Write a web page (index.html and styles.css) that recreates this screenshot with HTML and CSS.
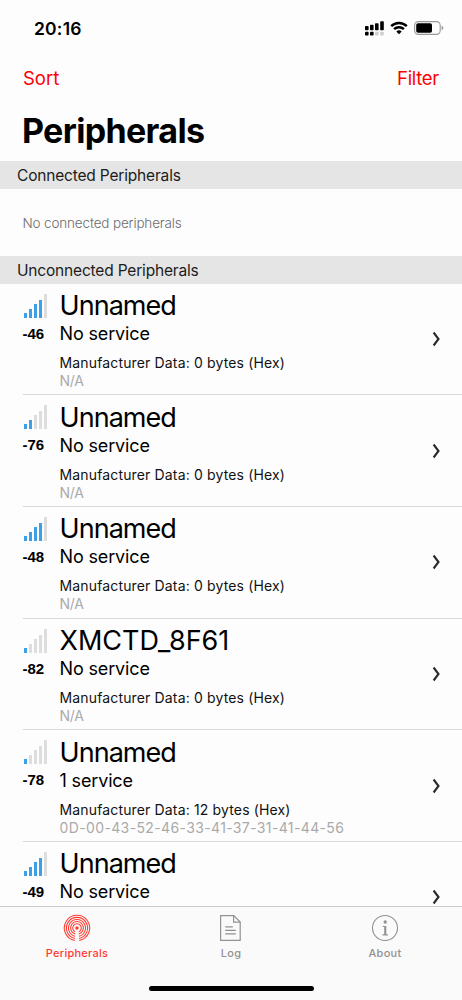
FILE: index.html
```html
<!DOCTYPE html>
<html lang="en">

<head>
  <meta charset="UTF-8">
  <title>Peripherals</title>
  <link rel="stylesheet" href="styles.css">
</head>

<body>
  <div class="app">
    <div class="status-bar">
      <div class="clock">20:16</div>
      <div class="status-icons">
        <svg class="cellular" width="19" height="15" viewBox="0 0 19 15">
          <g fill="#000000">
            <rect x="0" y="5" width="3.6" height="4.2" rx="0.8" />
            <rect x="5" y="3.8" width="3.6" height="5.4" rx="0.8" />
            <rect x="10" y="2.2" width="3.6" height="7" rx="0.8" />
            <rect x="15.2" y="0.3" width="3.6" height="8.9" rx="0.8" />
            <rect x="0" y="10.8" width="3.6" height="3.8" rx="0.8" />
            <rect x="5" y="10.8" width="3.6" height="3.8" rx="0.8" />
          </g>
          <g fill="#cfcfcf">
            <rect x="10" y="10.8" width="3.6" height="3.8" rx="0.8" />
            <rect x="15.2" y="10.8" width="3.6" height="3.8" rx="0.8" />
          </g>
        </svg>
        <svg class="wifi" width="18" height="14" viewBox="0 0 18 14">
          <g fill="none" stroke="#000000" stroke-width="2.5">
            <path d="M1.2 5.2A11.2 11.2 0 0 1 16.8 5.2" />
            <path d="M4.1 8.2A7 7 0 0 1 13.9 8.2" />
          </g>
          <path d="M6.3 10.5A3.9 3.9 0 0 1 11.7 10.5L9 13.3Z" fill="#000000" />
        </svg>
        <svg class="battery" width="30" height="14" viewBox="0 0 30 14">
          <rect x="0.6" y="0.6" width="25.6" height="12.8" rx="3.8" fill="none" stroke="#999999" stroke-width="1.1" />
          <rect x="2.2" y="2.2" width="15.8" height="9.6" rx="1.8" fill="#000000" />
          <path d="M27.6 4.8Q29.4 5.4 29.4 7T27.6 9.2Z" fill="#999999" />
        </svg>
      </div>
    </div>

    <div class="nav-bar">
      <span class="nav-sort">Sort</span>
      <span class="nav-filter">Filter</span>
    </div>
    <h1>Peripherals</h1>

    <div class="section-header section-connected">Connected Peripherals</div>
    <div class="empty">No connected peripherals</div>
    <div class="section-header section-unconnected">Unconnected Peripherals</div>

    <div class="list">
      <div class="row">
        <div class="signal">
          <div class="bars"><i class="on"></i><i class="on"></i><i class="on"></i><i class="on"></i><i></i></div>
          <div class="rssi">-46</div>
        </div>
        <div class="info">
          <div class="name">Unnamed</div>
          <div class="services">No service</div>
          <div class="data-label">Manufacturer Data: 0 bytes (Hex)</div>
          <div class="data-value">N/A</div>
        </div>
        <svg class="chevron" width="9" height="16" viewBox="0 0 9 16"><path d="M1.6 1.5L6.5 8L1.6 14.5" /></svg>
      </div>
      <div class="row">
        <div class="signal">
          <div class="bars"><i class="on"></i><i class="on"></i><i></i><i></i><i></i></div>
          <div class="rssi">-76</div>
        </div>
        <div class="info">
          <div class="name">Unnamed</div>
          <div class="services">No service</div>
          <div class="data-label">Manufacturer Data: 0 bytes (Hex)</div>
          <div class="data-value">N/A</div>
        </div>
        <svg class="chevron" width="9" height="16" viewBox="0 0 9 16"><path d="M1.6 1.5L6.5 8L1.6 14.5" /></svg>
      </div>
      <div class="row">
        <div class="signal">
          <div class="bars"><i class="on"></i><i class="on"></i><i class="on"></i><i class="on"></i><i></i></div>
          <div class="rssi">-48</div>
        </div>
        <div class="info">
          <div class="name">Unnamed</div>
          <div class="services">No service</div>
          <div class="data-label">Manufacturer Data: 0 bytes (Hex)</div>
          <div class="data-value">N/A</div>
        </div>
        <svg class="chevron" width="9" height="16" viewBox="0 0 9 16"><path d="M1.6 1.5L6.5 8L1.6 14.5" /></svg>
      </div>
      <div class="row">
        <div class="signal">
          <div class="bars"><i class="on"></i><i></i><i></i><i></i><i></i></div>
          <div class="rssi">-82</div>
        </div>
        <div class="info">
          <div class="name name-id">XMCTD_8F61</div>
          <div class="services">No service</div>
          <div class="data-label">Manufacturer Data: 0 bytes (Hex)</div>
          <div class="data-value">N/A</div>
        </div>
        <svg class="chevron" width="9" height="16" viewBox="0 0 9 16"><path d="M1.6 1.5L6.5 8L1.6 14.5" /></svg>
      </div>
      <div class="row">
        <div class="signal">
          <div class="bars"><i class="on"></i><i></i><i></i><i></i><i></i></div>
          <div class="rssi">-78</div>
        </div>
        <div class="info">
          <div class="name">Unnamed</div>
          <div class="services">1 service</div>
          <div class="data-label">Manufacturer Data: 12 bytes (Hex)</div>
          <div class="data-value data-hex">0D-00-43-52-46-33-41-37-31-41-44-56</div>
        </div>
        <svg class="chevron" width="9" height="16" viewBox="0 0 9 16"><path d="M1.6 1.5L6.5 8L1.6 14.5" /></svg>
      </div>
      <div class="row">
        <div class="signal">
          <div class="bars"><i class="on"></i><i class="on"></i><i class="on"></i><i class="on"></i><i></i></div>
          <div class="rssi">-49</div>
        </div>
        <div class="info">
          <div class="name">Unnamed</div>
          <div class="services">No service</div>
        </div>
        <svg class="chevron" width="9" height="16" viewBox="0 0 9 16"><path d="M1.6 1.5L6.5 8L1.6 14.5" /></svg>
      </div>
    </div>

    <div class="tab-bar">
      <div class="tabs">
        <div class="tab active">
          <svg width="28" height="28" viewBox="0 0 28 28">
            <g fill="none" stroke="#ff3b30" stroke-width="1.05">
              <path d="M11.8 26.5A12.7 12.7 0 1 1 16.2 26.5" />
              <path d="M12 24.4A10.6 10.6 0 1 1 16 24.4" />
              <path d="M12.1 22.3A8.5 8.5 0 1 1 15.9 22.3" />
              <path d="M12.2 20.1A6.4 6.4 0 1 1 15.8 20.1" />
              <path d="M12.1 17.9A4.3 4.3 0 1 1 15.9 17.9" />
            </g>
            <circle cx="14" cy="14" r="1.7" fill="#ff3b30" />
          </svg>
          <span>Peripherals</span>
        </div>
        <div class="tab">
          <svg width="28" height="28" viewBox="0 0 28 28">
            <g fill="none" stroke="#929292" stroke-width="1.2">
              <path d="M3.6 1.6H16.8L23.2 8V26.4H3.6Z" />
              <path d="M16.6 1.6V8.2H23.2" />
              <path d="M8.2 12.9H15.8M8.2 16.4H18.8M8.2 19.9H18.8" />
            </g>
          </svg>
          <span>Log</span>
        </div>
        <div class="tab">
          <svg width="28" height="28" viewBox="0 0 28 28">
            <circle cx="14" cy="14" r="12.5" fill="none" stroke="#929292" stroke-width="1.1" />
            <circle cx="14.2" cy="8" r="1.7" fill="#929292" />
            <path d="M11.7 11.9H15.3V20.3H16.9V21.4H11.5V20.3H13.2V13H11.7Z" fill="#929292" />
          </svg>
          <span>About</span>
        </div>
      </div>
      <div class="home-indicator"></div>
    </div>
  </div>
</body>

</html>
```
FILE: styles.css
```css
* {
  box-sizing: border-box;
  margin: 0;
  padding: 0;
}

body {
  font-family: 'Inter', 'Liberation Sans', sans-serif;
  background-color: #fdfdfd;
  color: #000000;
}

.app {
  width: 462px;
  height: 1000px;
  display: flex;
  flex-direction: column;
  overflow: hidden;
  white-space: nowrap;
}

.status-bar {
  height: 56px;
  flex: none;
  display: flex;
  justify-content: space-between;
  align-items: center;
  padding: 0 18.5px 0 34px;
}

.clock {
  font-size: 17.5px;
  font-weight: 600;
  letter-spacing: 0.2px;
}

.status-icons {
  display: flex;
  align-items: center;
  gap: 6px;
}

.nav-bar {
  height: 44px;
  flex: none;
  display: flex;
  justify-content: space-between;
  align-items: center;
  padding: 0 23px;
  font-size: 18.5px;
  color: #ff0000;
}

.nav-filter {
  letter-spacing: -0.3px;
}

h1 {
  height: 61px;
  flex: none;
  padding-left: 22px;
  font-size: 34px;
  line-height: 62px;
  font-weight: 700;
  letter-spacing: -0.65px;
}

.section-header {
  height: 28px;
  flex: none;
  padding-left: 17px;
  font-size: 15.5px;
  line-height: 29px;
  letter-spacing: -0.18px;
  color: #1c1c1c;
  background-color: #e5e5e5;
}

.empty {
  height: 67px;
  flex: none;
  padding-left: 22.5px;
  font-size: 13.5px;
  font-weight: 300;
  line-height: 68px;
  letter-spacing: -0.16px;
  color: #6c6c6c;
}

.list {
  flex: 1;
  min-height: 0;
  overflow: hidden;
}

.row {
  height: 111.67px;
  margin-left: 22.5px;
  display: flex;
  border-bottom: 1px solid #d9d9d9;
}

.row:first-child {
  height: 111.2px;
}

.signal {
  width: 37px;
  padding-top: 10.3px;
}

.bars {
  height: 24px;
  display: flex;
  align-items: flex-end;
  gap: 2px;
  padding-left: 1px;
}

.bars i {
  width: 3.1px;
  height: 5px;
  background-color: #dddddd;
}

.bars i:nth-child(2) {
  height: 9px;
}

.bars i:nth-child(3) {
  height: 14px;
}

.bars i:nth-child(4) {
  height: 18px;
}

.bars i:nth-child(5) {
  height: 24px;
}

.bars .on {
  background-color: #3d9fe6;
}

.rssi {
  font-family: 'Liberation Sans', Arial, sans-serif;
  font-size: 15px;
  font-weight: 700;
  line-height: 18px;
  margin-top: 7px;
}

.info {
  flex: 1;
  padding-top: 5.4px;
}

.name {
  font-size: 27px;
  line-height: 34px;
  letter-spacing: -0.95px;
}

.name-id {
  letter-spacing: 0;
}

.services {
  font-size: 18px;
  line-height: 22px;
  letter-spacing: -0.15px;
}

.data-label {
  margin-top: 9px;
  font-size: 14px;
  line-height: 18px;
  letter-spacing: 0.15px;
  color: #111111;
}

.data-value {
  font-size: 14px;
  line-height: 18px;
  letter-spacing: -0.2px;
  color: #aaaaaa;
}

.data-hex {
  letter-spacing: 0.37px;
}

.chevron {
  width: 9px;
  height: 16px;
  margin: 47.4px 21.5px 0 0;
}

.chevron path {
  fill: none;
  stroke: #2b2b2b;
  stroke-width: 2.1;
}

.tab-bar {
  height: 94px;
  flex: none;
  border-top: 1px solid #cccccc;
  background-color: #fafafa;
}

.tabs {
  height: 79px;
  display: flex;
}

.tab {
  flex: 1;
  display: flex;
  flex-direction: column;
  align-items: center;
  padding-top: 7px;
  font-size: 11px;
  font-weight: 500;
  line-height: 16px;
  letter-spacing: 0.25px;
  color: #929292;
}

.tab span {
  margin-top: 3px;
}

.tab.active {
  color: #ff3b30;
}

.home-indicator {
  width: 165px;
  height: 5px;
  margin: 0 auto;
  border-radius: 3px;
  background-color: #000000;
}
```
